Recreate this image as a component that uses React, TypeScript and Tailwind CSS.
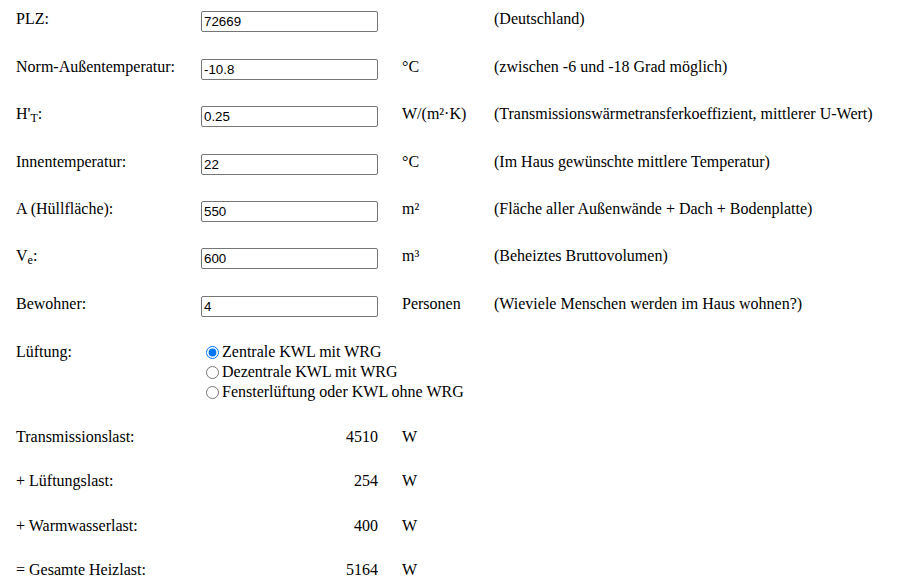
import React from 'react';

interface InputRow {
    label: React.ReactNode;
    value: string;
    unit: React.ReactNode;
    desc: string;
    h: string;
}

interface ResultRow {
    label: string;
    value: string;
    h: string;
}

const inputRows: InputRow[] = [
    { label: 'PLZ:', value: '72669', unit: '', desc: '(Deutschland)', h: 'h-[48px]' },
    { label: 'Norm-Außentemperatur:', value: '-10.8', unit: '°C', desc: '(zwischen -6 und -18 Grad möglich)', h: 'h-[47px]' },
    { label: <>H'<sub>T</sub>:</>, value: '0.25', unit: 'W/(m²·K)', desc: '(Transmissionswärmetransferkoeffizient, mittlerer U-Wert)', h: 'h-[48px]' },
    { label: 'Innentemperatur:', value: '22', unit: '°C', desc: '(Im Haus gewünschte mittlere Temperatur)', h: 'h-[47px]' },
    { label: 'A (Hüllfläche):', value: '550', unit: 'm²', desc: '(Fläche aller Außenwände + Dach + Bodenplatte)', h: 'h-[47px]' },
    { label: <>V<sub>e</sub>:</>, value: '600', unit: 'm³', desc: '(Beheiztes Bruttovolumen)', h: 'h-[48px]' },
    { label: 'Bewohner:', value: '4', unit: 'Personen', desc: '(Wieviele Menschen werden im Haus wohnen?)', h: 'h-[47px]' },
];

const results: ResultRow[] = [
    { label: 'Transmissionslast:', value: '4510', h: 'h-[44px]' },
    { label: '+ Lüftungslast:', value: '254', h: 'h-[45px]' },
    { label: '+ Warmwasserlast:', value: '400', h: 'h-[44px]' },
    { label: '= Gesamte Heizlast:', value: '5164', h: 'h-[44px]' },
];

const ventOptions = ['Zentrale KWL mit WRG', 'Dezentrale KWL mit WRG', 'Fensterlüftung oder KWL ohne WRG'];

const App: React.FC = () => {
    return (
        <div className="min-h-[587px] bg-white text-black font-['Liberation_Serif','Times_New_Roman',serif] text-[16px] leading-[18px] pl-4 pt-[10px]">
            {inputRows.map((row, i) => (
                <div key={i} className={`flex items-start ${row.h}`}>
                    <div className="w-[185px]">{row.label}</div>
                    <input
                        type="text"
                        defaultValue={row.value}
                        className="mt-px w-[177px] h-[21px] border border-[#767676] rounded-[2px] px-[2px] py-0 leading-[19px] text-[13.33px] font-['Liberation_Sans',Arial,sans-serif] text-black bg-white"
                    />
                    <div className="w-[92px] ml-[24px]">{row.unit}</div>
                    <div>{row.desc}</div>
                </div>
            ))}

            <div className="flex items-start h-[86px]">
                <div className="w-[185px] mt-px">Lüftung:</div>
                <div className="flex flex-col">
                    {ventOptions.map((opt, i) => (
                        <label key={i} className="flex items-center h-[20px]">
                            <input
                                type="radio"
                                name="lueftung"
                                defaultChecked={i === 0}
                                className="w-[13px] h-[13px] ml-[5px] mr-[3px] accent-[#0075ff]"
                            />
                            <span>{opt}</span>
                        </label>
                    ))}
                </div>
            </div>

            {results.map((r, i) => (
                <div key={i} className={`flex items-start ${r.h}`}>
                    <div className="w-[185px]">{r.label}</div>
                    <div className="w-[177px] text-right">{r.value}</div>
                    <div className="ml-[24px]">W</div>
                </div>
            ))}
        </div>
    );
};

export default App;
